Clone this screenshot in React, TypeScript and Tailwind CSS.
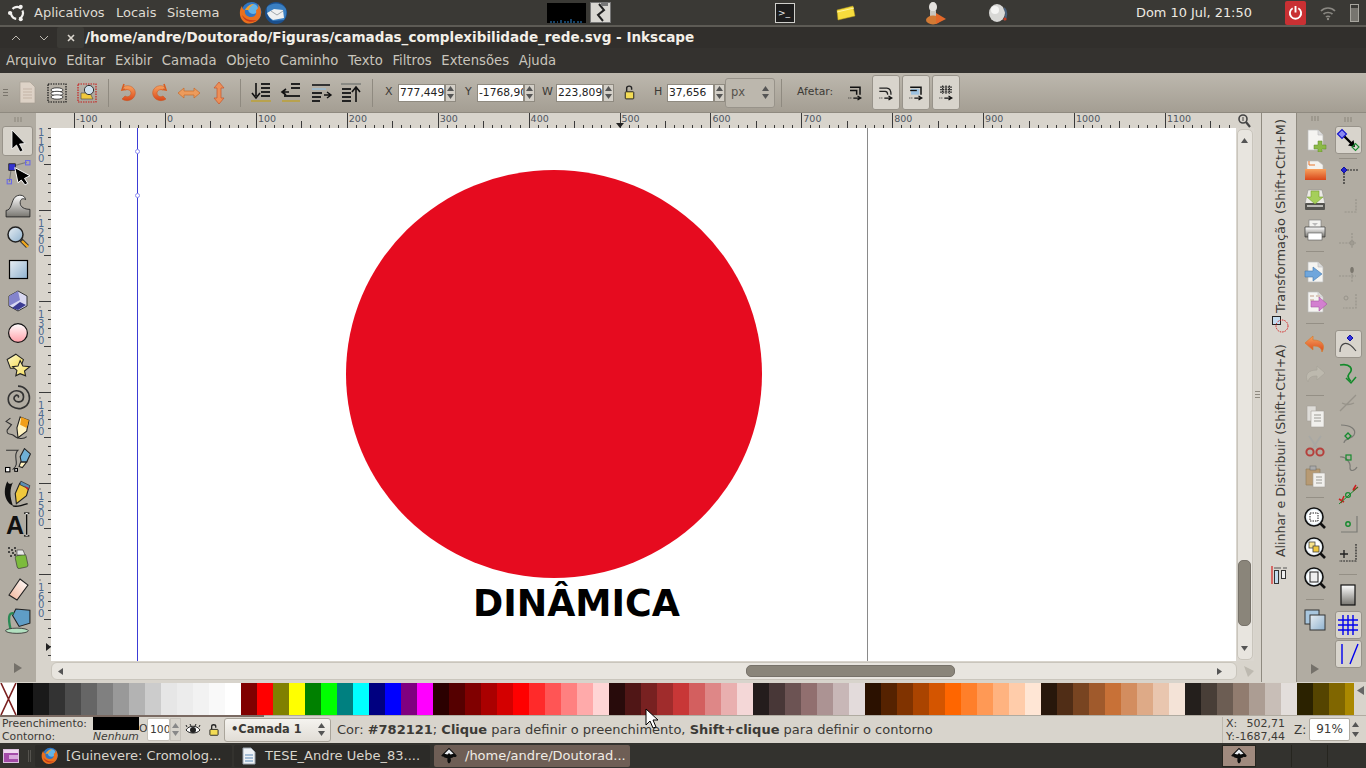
import React from "react";

const S = ({ c, s = 24, children }: { c?: string; s?: number; children: React.ReactNode }) => (
  <svg width={s} height={s} viewBox="0 0 24 24" className={c} fill="none">{children}</svg>
);

const Defs = () => (
  <svg width="0" height="0" className="absolute">
    <defs>
      <linearGradient id="gBlue" x1="0" y1="0" x2="1" y2="1"><stop offset="0" stopColor="#e8eef3" /><stop offset="1" stopColor="#8fb2cf" /></linearGradient>
      <linearGradient id="gGray" x1="0" y1="0" x2="0" y2="1"><stop offset="0" stopColor="#ffffff" /><stop offset="1" stopColor="#77756f" /></linearGradient>
      <linearGradient id="gPink" x1="0" y1="0" x2="0" y2="1"><stop offset="0" stopColor="#ffffff" /><stop offset="1" stopColor="#ff9fa8" /></linearGradient>
      <linearGradient id="gOr" x1="0" y1="0" x2="0" y2="1"><stop offset="0" stopColor="#f7a25f" /><stop offset="1" stopColor="#d9471a" /></linearGradient>
      <linearGradient id="gYel" x1="0" y1="0" x2="1" y2="1"><stop offset="0" stopColor="#fffbd0" /><stop offset="1" stopColor="#f3d950" /></linearGradient>
    </defs>
  </svg>
);

/* left tools */
const ArrowT = () => <S><path d="M6 1 L6 20 L10.5 16 L14 23 L17 21.5 L13.5 15 L19 14.5 Z" fill="#000" stroke="#fff" strokeWidth="0.8" /></S>;
const NodeT = () => <S s={26}><path d="M4 20 L6 6 L20 2" stroke="#777" /><rect x="3.5" y="3.5" width="6" height="6" fill="#3333d0" stroke="#000" strokeWidth=".6" /><rect x="19" y="0.5" width="4" height="4" stroke="#6a6ae8" /><rect x="2" y="18" width="4" height="4" stroke="#6a6ae8" /><path d="M9 7 L23 14.5 L18 17 L21 21.5 L18.5 23 L15 18.5 L12 21 Z" fill="#000" stroke="#fff" strokeWidth=".9" /></S>;
const TweakT = () => <S s={26}><path d="M1 23 L1 17 C6 17 6 8 9 5 C12 2 18 2 19 7 C16 5 14 7 14 10 C14 14 18 16 23 16 L23 23 Z" fill="url(#gGray)" stroke="#222" strokeWidth=".8" /></S>;
const ZoomT = () => <S><circle cx="9.5" cy="9.5" r="7.5" fill="url(#gBlue)" stroke="#222" strokeWidth="1.5" /><path d="M15 15 L21.5 21.5" stroke="#333" strokeWidth="4" /><path d="M16 16 L22 22" stroke="#f0a91e" strokeWidth="2.4" /></S>;
const RectT = () => <S><rect x="3.5" y="3.5" width="18" height="18" fill="url(#gBlue)" stroke="#000" strokeWidth="1.2" /></S>;
const BoxT = () => <S><path d="M12 2 L21 7 L21 17 L12 22 L3 17 L3 7 Z" fill="#d9d8f2" stroke="#333" strokeWidth="1" /><path d="M3 7 L12 2 L14 11 L3 17Z" fill="#8484cc" /><path d="M6 19 L14 13 L20 16 L12 21 Z" fill="#3b3b92" /></S>;
const CircleT = () => <S><circle cx="12" cy="12" r="9.4" fill="url(#gPink)" stroke="#111" strokeWidth="1.2" /></S>;
const StarT = () => <S s={26}><path d="M2 7 L10 2 L17 7 L14 15 L5 15 Z" fill="url(#gYel)" stroke="#222" /><path d="M14 8 L16.5 13 L23 13.5 L18 17.5 L19 22 L14 20 L10 22 L11 17 L7 13.5 L12 13 Z" fill="url(#gYel)" stroke="#222" /></S>;
const SpiralT = () => <S s={26}><path d="M12 12.5 C13.5 11 11 9.5 9.5 11 C7 13 9 17 13 16.5 C18 16 18.5 9 14 7 C8 4.5 3 9 3 14 C3 20 9 23.5 15 22.5 C19 21.5 22 18 22.5 14 C23 7 18 2 12 2" stroke="#333" strokeWidth="1.5" /></S>;
const PencilT = () => <S s={26}><path d="M5 2 L1 5 L6 8 L2 13 C1 18 6 16 8 18 C11 21 17 22 20 19" stroke="#333" strokeWidth="1" /><path d="M14 1 L22 4 L20 14 L12 20 L11 11 Z" fill="#fff3c0" stroke="#222" /><path d="M15 1 L22 4 L20 11 L14 8 Z" fill="#f19f1a" /></S>;
const PenT = () => <S s={26}><path d="M1 2 H12 C6 8 15 14 7 20" stroke="#333" strokeWidth="1" /><rect x="0.5" y="18" width="4" height="4" fill="#fff" stroke="#000" /><rect x="9" y="19" width="2.5" height="2.5" fill="#fff" stroke="#000" /><path d="M18 0.5 L23.5 5.5 L20 13 L15 13 L14 8 Z" fill="#6fb0d6" stroke="#222" /><path d="M14.5 13 L20 13 L16 18 L13 17 Z" fill="#fff3c0" stroke="#222" /></S>;
const CalligT = () => <S s={27}><path d="M3 1 C-1 9 0 19 8 23 C5 15 5 8 8 2 C6 4 4 4 3 1 Z" fill="#111" /><path d="M8 23 C11 24 15 23 21 21" stroke="#111" strokeWidth="1.4" /><path d="M14 3 L22 7 L20 14 L11 21 L10 12 Z" fill="#f0c83c" stroke="#222" /><path d="M15 1 L23 5 L22 8 L14 4 Z" fill="#5c8fb5" stroke="#222" strokeWidth=".6" /><path d="M18 5 L22 7 L21 9 Z" fill="#c8222a" /></S>;
const TextT = () => <S s={26}><text x="1" y="20" fontFamily="Liberation Sans" fontWeight="700" fontSize="23" fill="#111">A</text><path d="M17.5 1 h5 M20 1 v21 M17.5 22 h5" stroke="#000" strokeWidth="1.1" /><path d="M19 1.5 h2 M19 21.5 h2" stroke="#fff" /></S>;
const SprayT = () => <S><rect x="10" y="10" width="11" height="13" rx="2" transform="rotate(-12 15 16)" fill="#7cbb3c" stroke="#333" strokeWidth=".6" /><path d="M11 5 h6 l2 5 h-8 z" fill="#e9e9e9" stroke="#333" strokeWidth=".6" /><path d="M2 3 h2 M5 5 h2 M8 3 h2 M2 7 h2 M6 8 h2 M9 6 h1 M4 11 h2 M8 10 h2" stroke="#222" strokeWidth="1.4" /></S>;
const EraserT = () => <S><path d="M14 2 L22 8 L11 23 L3 18 Z" fill="url(#eraser)" stroke="#222" strokeWidth="1.1" /><defs><linearGradient id="eraser" x1="1" y1="0" x2="0" y2="1"><stop offset="0" stopColor="#fff" /><stop offset="1" stopColor="#f0b399" /></linearGradient></defs></S>;
const BucketT = () => <S s={26}><path d="M10 1 L23 2 L23 14 L13 17 L7 7 Z" fill="#5f9dc6" stroke="#222" /><path d="M8 5 C3 4 3 10 5 19" stroke="#2a8a55" strokeWidth="2.2" /><ellipse cx="11" cy="21" rx="10.5" ry="2.4" fill="#b3e0c0" stroke="#222" strokeWidth=".7" /></S>;

/* commands */
const Page = ({ children }: { children?: React.ReactNode }) => <S><path d="M5 2 H15 L20 7 V22 H5Z" fill="#f5f4f1" stroke="#bbb" strokeWidth=".7" /><path d="M15 2 V7 H20" fill="#ddd" stroke="#bbb" strokeWidth=".6" />{children}</S>;
const NewC = () => <Page><path d="M15 13 h4 v4 h4 v4 h-4 v3 h-4 v-3 h-4 v-4 h4z" fill="#8cb946" stroke="#5f8a2a" strokeWidth=".5" /></Page>;
const OpenC = () => <S><path d="M4 3 H15 L20 7 V14 H4Z" fill="#f4f2ee" stroke="#bbb" strokeWidth=".6" /><path d="M6 3 V7 H12" fill="none" stroke="#e8762c" /><path d="M2 11 H23 V22 H2Z" fill="url(#gOr)" /></S>;
const SaveC = () => <S><path d="M5 2 H19 L22 16 H2Z" fill="#eceae6" stroke="#888" strokeWidth=".5" /><rect x="2" y="15" width="20" height="7" rx="1" fill="#55544f" /><rect x="4" y="17" width="16" height="2" fill="#bdbcb7" /><path d="M8 3 h8 v6 h4 l-8 7 l-8 -7 h4z" fill="#a5cf5a" stroke="#76a030" strokeWidth=".6" /></S>;
const PrintC = () => <S><rect x="6" y="2" width="12" height="8" fill="#f3f3f0" stroke="#777" strokeWidth=".6" /><path d="M2 9 H22 V19 H2Z" fill="url(#gGray)" stroke="#333" strokeWidth=".7" /><rect x="5" y="15" width="14" height="7" fill="#fff" stroke="#555" strokeWidth=".6" /><path d="M9 5 h6 l-3 3z" fill="#bbb" /></S>;
const ImportC = () => <Page><path d="M2 11 H10 V7 L19 14 L10 21 V17 H2Z" fill="#6fa6dc" stroke="#4478ad" strokeWidth=".6" /></Page>;
const ExportC = () => <Page><path d="M7 5 h4 v2 h-4z M13 5 h4 v2 h-4z M7 9 h4 v2 h-4z" fill="#dcc9bd" /><path d="M8 11 H16 V7 L24 14 L16 21 V17 H8Z" fill="#d37fd0" stroke="#a657a3" strokeWidth=".6" /></Page>;
const UndoC = () => <S><path d="M10 4 L2 11 L10 18 V14 C15 14 18 15 19 20 C23 13 19 8 10 8Z" fill="url(#gOr)" stroke="#d97b2c" strokeWidth=".7" /></S>;
const RedoC = () => <S><path d="M14 4 L22 11 L14 18 V14 C9 14 6 15 5 20 C1 13 5 8 14 8Z" fill="#bdb9ae" stroke="#a7a399" strokeWidth=".7" /></S>;
const CopyC = () => <S><path d="M4 2 H13 V17 H4Z" fill="#dedcd8" stroke="#a5a39c" strokeWidth=".6" /><path d="M8 7 H21 V23 H8Z" fill="#f1f0ed" stroke="#a5a39c" strokeWidth=".6" /><path d="M11 11 h7 M11 14 h7 M11 17 h7" stroke="#9c9b95" /></S>;
const CutC = () => <S><path d="M6 2 L15 15 M18 2 L9 15" stroke="#a8a8a4" strokeWidth="1.8" /><circle cx="7" cy="18" r="3.6" stroke="#b5403c" strokeWidth="2" /><circle cx="17" cy="18" r="3.6" stroke="#b5403c" strokeWidth="2" /></S>;
const PasteC = () => <S><path d="M3 5 H17 V21 H3Z" fill="#b79a73" stroke="#8f7a58" strokeWidth=".6" /><rect x="7" y="2" width="6" height="4" fill="#aaa" stroke="#666" strokeWidth=".5" /><path d="M10 9 H22 V23 H10Z" fill="#f1f0ed" stroke="#a5a39c" strokeWidth=".6" /><path d="M13 13 h6 M13 16 h6 M13 19 h6" stroke="#9c9b95" /></S>;
const ZoomBase = ({ children }: { children?: React.ReactNode }) => <S><circle cx="11" cy="11" r="9" fill="#e3edf3" stroke="#111" strokeWidth="1.6" /><circle cx="11" cy="11" r="7" fill="#fff" />{children}<path d="M17.5 17.5 L22 22" stroke="#111" strokeWidth="2.6" /></S>;
const ZoomSel = () => <ZoomBase><rect x="7" y="7" width="8" height="8" stroke="#222" strokeDasharray="1.5 1" /></ZoomBase>;
const ZoomDraw = () => <ZoomBase><rect x="6" y="6" width="6" height="6" fill="#f8e38a" stroke="#444" strokeWidth=".8" /><rect x="10" y="10" width="6" height="6" fill="#f0c83c" stroke="#444" strokeWidth=".8" /></ZoomBase>;
const ZoomPage = () => <ZoomBase><rect x="7" y="6" width="8" height="10" fill="#eee" stroke="#222" /></ZoomBase>;
const DupC = () => <S><rect x="2" y="2" width="14" height="14" fill="#a8c6de" stroke="#333" /><rect x="7" y="7" width="15" height="15" fill="url(#gBlue)" stroke="#333" /></S>;

/* snap */
const SnapNodes = () => <S><path d="M6 6 L18 18" stroke="#000" strokeWidth="2.4" /><path d="M19 19 l-7 -1.5 l5.5 -5.5z" fill="#000" /><path d="M1.5 6 L6 1.5 L10.5 6 L6 10.5Z" fill="#8a8af0" stroke="#1212cc" strokeWidth="1.1" /><path d="M16 19 L19.5 15.5 L23 19 L19.5 22.5Z" stroke="#168a2e" strokeWidth="1.1" /></S>;
const SnapBbox = () => <S><path d="M8 6 H22 M8 6 V20" stroke="#222" strokeDasharray="2 1" strokeWidth="1.2" /><path d="M5 6 L8 3 L11 6 L8 9Z" fill="#2222d0" stroke="#1212a0" /></S>;
const f = "#97938a";
const SnapA = () => <S><path d="M20 3 V16 H8" stroke={f} strokeDasharray="2 1.2" strokeWidth="1.2" /></S>;
const SnapB = () => <S><path d="M3 15 H20 M16 5 V20" stroke={f} strokeDasharray="2 1.2" strokeWidth="1.2" /><circle cx="16" cy="15" r="2.2" fill="#a09c92" stroke={f} /></S>;
const SnapC = () => <S><path d="M3 16 H20 M16 7 V22" stroke={f} strokeDasharray="2 1.2" strokeWidth="1.2" /><ellipse cx="16" cy="10" rx="1.8" ry="3" fill="#7b776e" /></S>;
const SnapD = () => <S><path d="M20 4 V18 H7" stroke={f} strokeDasharray="2 1.2" strokeWidth="1.2" /><circle cx="10" cy="8" r="2" stroke={f} /></S>;
const SnapE = () => <S><path d="M4 20 C4 12 10 6 20 19" stroke="#444" strokeWidth="1.1" fill="none" /><path d="M11 6 L14 3 L17 6 L14 9Z" fill="#3030e0" stroke="#1212a0" /></S>;
const SnapF = () => <S><path d="M4 4 C14 2 18 8 13 13 C11 15 13 19 15 20" stroke="#138a2a" strokeWidth="1.7" /><path d="M10 17 L15 22 L20 16" stroke="#138a2a" strokeWidth="1.5" /></S>;
const SnapG = () => <S><path d="M4 20 L20 4 M6 12 C10 14 14 14 18 12" stroke={f} strokeWidth="1.3" /></S>;
const SnapH = () => <S><path d="M5 4 C14 4 21 8 18 14 C16 18 8 17 8 22" stroke="#7b7a75" strokeWidth="1.2" /><path d="M9 15 L12 12 L15 15 L12 18Z" stroke="#168a2e" strokeWidth="1.3" /></S>;
const SnapI = () => <S><path d="M4 6 C10 5 15 12 14 17 C14 20 18 21 21 16" stroke="#7b7a75" strokeWidth="1.2" /><rect x="10" y="4" width="5" height="5" stroke="#168a2e" strokeWidth="1.2" /></S>;
const SnapJ = () => <S><path d="M3 17 L8 20 M5 21 L8 14 M17 9 L22 5 M17 8 L20 3" stroke="#cc2020" strokeWidth="1.5" /><path d="M3 22 L22 5" stroke="#168a2e" strokeWidth="1" /><circle cx="12" cy="13" r="2.4" stroke="#168a2e" strokeWidth="1.2" /></S>;
const SnapK = () => <S><path d="M21 4 V20 H5" stroke="#7b7a75" strokeWidth="1.2" /><circle cx="12" cy="12" r="2.2" stroke="#168a2e" strokeWidth="1.4" /></S>;
const SnapL = () => <S><path d="M8 9 V17 M4 13 H12" stroke="#222" strokeWidth="1.4" /><path d="M20 3 V20 H3" stroke="#222" strokeDasharray="1.8 1" strokeWidth="1.2" /></S>;
const SnapM = () => <S><rect x="5" y="2" width="14" height="20" fill="url(#gGray)" stroke="#111" strokeWidth="1.2" /></S>;
const SnapN = () => <S><path d="M2 7 H22 M2 12 H22 M2 17 H22 M7 2 V22 M12 2 V22 M17 2 V22" stroke="#0000ee" strokeWidth="1.4" /></S>;
const SnapO = () => <S><path d="M6 2 V22 M22 2 L14 22" stroke="#0000ee" strokeWidth="1.4" /></S>;

/* toolbar */
const DocT = () => <S c="opacity-80"><path d="M5 1 H15 L20 6 V22 H5Z" fill="#e9dcd0" stroke="#a89d92" strokeWidth=".7" /><path d="M8 8 h9 M8 11 h9 M8 14 h9 M8 17 h9" stroke="#c9b7a8" /></S>;
const SelAll = () => <S><rect x="3" y="3" width="18" height="18" stroke="#111" strokeDasharray="1.5 1" strokeWidth="1.2" /><ellipse cx="12" cy="9" rx="6" ry="2.2" fill="#fff" stroke="#222" strokeWidth=".8" /><ellipse cx="12" cy="12.5" rx="6" ry="2.2" fill="#fff" stroke="#222" strokeWidth=".8" /><ellipse cx="12" cy="16" rx="6" ry="2.2" fill="#fff" stroke="#222" strokeWidth=".8" /></S>;
const SelTouch = () => <S><rect x="3" y="3" width="18" height="18" stroke="#c81e1e" strokeDasharray="1.5 1" strokeWidth="1.2" /><path d="M6 12 H15 L18 18 H6Z" fill="#f0c83c" stroke="#444" strokeWidth=".6" /><circle cx="14" cy="9" r="4.6" fill="#cfe0ec" stroke="#333" /></S>;
const RotL = () => <S><path d="M7 3 L5 9 L11 8" fill="none" stroke="#d95b1f" strokeWidth="1.6" /><path d="M6 6 C13 2 20 8 18 14 C16 20 9 21 5 18 L8 15 C12 17 14 14 14 12 C14 9 10 8 8 9Z" fill="url(#gOr)" stroke="#c9531a" strokeWidth=".5" /></S>;
const RotR = () => <S><path d="M17 3 L19 9 L13 8" fill="none" stroke="#d95b1f" strokeWidth="1.6" /><path d="M18 6 C11 2 4 8 6 14 C8 20 15 21 19 18 L16 15 C12 17 10 14 10 12 C10 9 14 8 16 9Z" fill="url(#gOr)" stroke="#c9531a" strokeWidth=".5" /></S>;
const FlipH = () => <S><path d="M1 12 L7 7 V10 H17 V7 L23 12 L17 17 V14 H7 V17Z" fill="#ec9b5c" stroke="#c96a2a" strokeWidth=".7" /></S>;
const FlipV = () => <S><path d="M12 1 L17 7 H14 V17 H17 L12 23 L7 17 H10 V7 H7Z" fill="#ec8f58" stroke="#c9552a" strokeWidth=".7" /></S>;
const Lower2 = () => <S><path d="M12 3 h9 M12 7 h9 M12 11 h9 M12 15 h9" stroke="#222" strokeWidth="2" /><path d="M7 2 V15 M3 12 L7 17 L11 12" stroke="#111" strokeWidth="1.6" /><path d="M2 20 H22" stroke="#b8a24e" strokeWidth="2" /></S>;
const Lower1 = () => <S><path d="M12 3 h9 M12 7 h9 M5 15 h16" stroke="#222" strokeWidth="2" /><path d="M4 11 H10 M7 8 L3 11 L7 14" stroke="#111" strokeWidth="1.6" /><path d="M3 20 H21" stroke="#b8a24e" strokeWidth="2" /></S>;
const Raise1 = () => <S><path d="M3 4 H21" stroke="#333" strokeWidth="2" /><path d="M3 8 H17" stroke="#9fb8c8" strokeWidth="2" /><path d="M3 12 h10 M3 16 h9 M3 20 h8" stroke="#222" strokeWidth="2" /><path d="M15 14 H21 M18 11 L22 14 L18 17" stroke="#111" strokeWidth="1.4" /></S>;
const Raise2 = () => <S><path d="M2 3 H22" stroke="#8a8a84" strokeWidth="2" /><path d="M3 8 h9 M3 12 h9 M3 16 h9 M3 20 h9" stroke="#222" strokeWidth="2" /><path d="M17 21 V7 M13 11 L17 6 L21 11" stroke="#111" strokeWidth="1.6" /></S>;
const LockI = () => <S s={17}><path d="M8 11 V6 C8 2 15 2 15 6 V8" stroke="#222" strokeWidth="2" /><rect x="6" y="11" width="12" height="10" rx="1" fill="#f3dc55" stroke="#222" strokeWidth="1.4" /></S>;
const Affect = ({ kind }: { kind: number }) => <S s={20}>
  {kind === 0 && <path d="M6 5 H18 V14 M6 9 H14 V14" stroke="#111" strokeWidth="1.8" />}
  {kind === 1 && <path d="M4 6 H13 C17 6 18 9 18 14 M4 10 H11 C13 10 14 11 14 14" stroke="#222" strokeWidth="1.5" />}
  {kind === 2 && <><rect x="6" y="7" width="10" height="7" fill="#9ec2e0" /><path d="M5 5 H18 V14" stroke="#111" strokeWidth="1.8" /><path d="M5 9 H13" stroke="#111" strokeWidth="1.6" /></>}
  {kind === 3 && <path d="M5 5 H19 M5 8 H19 M5 11 H19 M8 3 V13 M12 3 V13 M16 3 V13" stroke="#222" strokeWidth="1.5" strokeDasharray="2 1" />}
  <path d="M10 18 H18 M15 15.5 L19 18 L15 20.5" stroke="#111" strokeWidth="1.5" />
  <path d="M4 18 h4" stroke="#111" strokeDasharray="1.2 1.2" />
</S>;

/* panel */
const UbuntuLogo = () => <S s={20}><circle cx="12" cy="12" r="7.2" stroke="#f2f1ef" strokeWidth="2.6" strokeDasharray="11.5 3.6" transform="rotate(-25 12 12)" /><circle cx="3.5" cy="12" r="2.4" fill="#f2f1ef" /><circle cx="16.5" cy="4.5" r="2.4" fill="#f2f1ef" /><circle cx="16.5" cy="19.5" r="2.4" fill="#f2f1ef" /></S>;
const Firefox = ({ s = 24 }: { s?: number }) => <S s={s}><circle cx="12.5" cy="11" r="10" fill="#2f76c4" /><circle cx="14" cy="8" r="5" fill="#63b4e8" /><path d="M19 3 C23 8 23 15 19 19 C15 23 8 24 4 20 C0 16 0 9 3 5 C3 8 5 9 6 9 C5 13 8 16 12 16 C16 16 18 13 17 9 C19 8 20 6 19 3Z" fill="#e9701d" /><path d="M3 14 C5 20 12 23 18 19 C12 20 7 19 3 14Z" fill="#c6381a" /><path d="M6 9 C8 5 12 3 15 3 C12 5 10 7 10 9Z" fill="#f0a030" /></S>;
const Thunder = () => <S><circle cx="12" cy="12" r="11" fill="#1b4f8c" /><path d="M3 6 C8 1 18 1 22 8 C23 12 22 16 20 19 L9 20 C4 17 2 10 3 6Z" fill="#3a7fc1" /><path d="M3 12 L10 8 L19 9 L20 17 L9 19 C6 17 4 15 3 12Z" fill="#eef0f0" /><path d="M7 10 L13 14 L19 10" stroke="#9fa6ab" strokeWidth="1" /></S>;
const InkLogo = ({ s = 20 }: { s?: number }) => <S s={s}><path d="M12 1 L22 11 C23 13 20 14 18 13 C17 15 15 14 14 15 C15 17 15 20 12 22 C9 20 10 17 10 15 C8 14 6 15 5 13 C3 13 1 12 2 11Z" fill="#0c0c0c" /><path d="M12 3 L18 9 L14 10 L12 8 L10 10 L6 9Z" fill="#e9edf2" /></S>;

const TopBar = () => (
  <div className="h-[27px] bg-[#3a3935] border-b-[2px] border-[#5d5b55] flex items-center text-[#dfdbd2] text-[13px] relative whitespace-nowrap">
    <div className="w-[34px] shrink-0 pl-[7px]"><UbuntuLogo /></div>
    <span className="w-[71px] shrink-0">Aplicativos</span>
    <span className="ml-[11px] w-[41px] shrink-0">Locais</span>
    <span className="ml-[10px] w-[52px] shrink-0">Sistema</span>
    <div className="ml-[20px] flex shrink-0"><Firefox /><span className="ml-[1px]"><Thunder /></span></div>
    <div className="ml-[259px] w-[39px] h-[20px] shrink-0 bg-black flex items-end justify-center"><svg width="36" height="4"><path d="M1 3h2M5 2v2M8 3h1M12 1v3M15 3h2M19 2v2M22 0v4M25 2v2M28 3h2M32 2v2" stroke="#2d86d2" /></svg></div>
    <div className="ml-[4px] w-[21px] h-[21px] shrink-0 bg-[#d9d7d2] border border-[#777] flex items-center justify-center"><svg width="16" height="19"><path d="M6 1 L11 7 L5 12 L10 18" stroke="#222" strokeWidth="2" fill="none" /><rect x="8" y="0" width="7" height="3" fill="#777" /></svg></div>
    <div className="ml-[164px] w-[20px] h-[20px] shrink-0 bg-[#1d1d1d] border border-[#cfcfcb] text-[9px] text-[#eee] leading-[18px] pl-[2px]">&gt;_</div>
    <div className="ml-[41px] shrink-0"><svg width="20" height="16"><path d="M1 5 L17 1 L19 11 L2 15Z" fill="#f6dc3d" stroke="#b99e1a" strokeWidth=".5" /><path d="M1 7 L18 3" stroke="#fff5a0" /></svg></div>
    <div className="ml-[66px] w-[26px] shrink-0 flex justify-center"><svg width="26" height="24"><ellipse cx="11" cy="6" rx="4" ry="5" fill="#e4e2de" /><path d="M8 10 h6 v5 h-6z" fill="#c9c6bf" /><ellipse cx="11" cy="19" rx="7" ry="4.4" fill="#d37a34" /><path d="M14 12 L24 18 L14 23Z" fill="#e2682a" /></svg></div>
    <div className="ml-[38px] shrink-0"><svg width="24" height="22"><ellipse cx="11" cy="11" rx="8" ry="9" fill="#d8d8d6" /><ellipse cx="9" cy="8" rx="4" ry="4" fill="#f5f5f4" /><path d="M18 6 C21 9 21 15 18 18" stroke="#49607c" strokeWidth="2" fill="none" /><circle cx="19" cy="17" r="1.6" fill="#c23b22" /></svg></div>
    <span className="ml-[126px] w-[115px] shrink-0 text-[12.9px] text-[#eeeae2]">Dom 10 Jul, 21:50</span>
    <div className="ml-[34px] w-[21px] h-[24px] shrink-0 rounded-[2px] bg-[#c93033] flex items-center justify-center"><svg width="15" height="15" viewBox="0 0 16 16"><path d="M5 3.5 A6 6 0 1 0 11 3.5 M8 1 V8" stroke="#fff" strokeWidth="2" fill="none" /></svg></div>
    <div className="ml-[12px] shrink-0"><svg width="20" height="20" viewBox="0 0 20 20"><path d="M3 8 C7 4 13 4 17 8 M5.5 11 C8 9 12 9 14.5 11 M8 14 C9 13 11 13 12 14" stroke="#8a8882" strokeWidth="1.7" fill="none" /><circle cx="10" cy="16" r="1.2" fill="#8a8882" /></svg></div>
    <div className="ml-[12px] w-[9px] h-[18px] shrink-0 border border-[#a8a69f] relative"><div className="absolute bottom-0 left-0 right-0 h-[13px] bg-[#77756f]" /></div>
  </div>
);

const TitleBar = () => (
  <div className="h-[21px] bg-[#312f2c] flex items-center text-[#f3efe8] font-bold text-[13.55px] relative">
    <span className="w-[28px] pl-[10px]"><svg width="12" height="8"><path d="M2 6 L6 2 L10 6" stroke="#bdb9b1" fill="none" /></svg></span>
    <span className="w-[29px] pl-[10px]"><svg width="12" height="8"><path d="M2 2 L6 6 L10 2" stroke="#bdb9b1" fill="none" /></svg></span>
    <span className="w-[27px] h-[21px] bg-[#3b3a36] rounded-[2px] flex items-center justify-center"><svg width="10" height="10"><path d="M2 2 L8 8 M8 2 L2 8" stroke="#dcd8d0" strokeWidth="1.6" /></svg></span>
    <span className="ml-[1px] whitespace-nowrap">/home/andre/Doutorado/Figuras/camadas_complexibilidade_rede.svg - Inkscape</span>
  </div>
);

const MenuBar = () => (
  <div className="h-[25px] bg-[#34322f] flex items-center pl-[6px] gap-[9.7px] text-[#c9c5bc] text-[13.2px]">
    {["Arquivo", "Editar", "Exibir", "Camada", "Objeto", "Caminho", "Texto", "Filtros", "Extensões", "Ajuda"].map((m) => <span key={m}>{m}</span>)}
  </div>
);

const Sep = () => <div className="w-[12px] flex justify-center"><div className="w-px h-[28px] bg-[#8f8a80]" /></div>;
const Tb = ({ children }: { children: React.ReactNode }) => <div className="w-[30px] flex items-center justify-center">{children}</div>;

const Spin = ({ w, v }: { w: string; v: string }) => (
  <div className="flex h-[18px]">
    <div className={w + " bg-white border border-[#8f8a80] text-[10.7px] leading-[16px] text-[#222] pl-[1px] overflow-hidden whitespace-nowrap"}>{v}</div>
    <div className="w-[11px] bg-[#d3cfc7] border border-[#8f8a80] flex flex-col items-center justify-around">
      <svg width="7" height="5"><path d="M0 5 L3.5 0 L7 5Z" fill="#555" /></svg>
      <svg width="7" height="5"><path d="M0 0 L3.5 5 L7 0Z" fill="#555" /></svg>
    </div>
  </div>
);

const AffBtn = ({ k }: { k: number }) => (
  <div className="w-[28px] h-[35px] rounded-[3px] bg-[#d8d4cc] border border-[#98938a] flex items-center justify-center"><Affect kind={k} /></div>
);

const ToolBar = () => (
  <div className="h-[40px] bg-gradient-to-b from-[#bdb8ae] to-[#a49e93] flex items-center border-b border-[#8f8a80] text-[#3c3a36] text-[11px]">
    <div className="w-[12px] pl-[3px] flex flex-col gap-[2px]"><div className="w-[5px] h-px bg-[#7a756c]" /><div className="w-[5px] h-px bg-[#7a756c]" /><div className="w-[5px] h-px bg-[#7a756c]" /></div>
    <Tb><DocT /></Tb><Tb><SelAll /></Tb><Tb><SelTouch /></Tb>
    <Sep />
    <Tb><RotL /></Tb><Tb><RotR /></Tb><Tb><FlipH /></Tb><Tb><FlipV /></Tb>
    <Sep />
    <Tb><Lower2 /></Tb><Tb><Lower1 /></Tb><Tb><Raise1 /></Tb><Tb><Raise2 /></Tb>
    <Sep />
    <span className="ml-[7px] w-[13px]">X</span>
    <Spin w="w-[47px]" v="777,449" />
    <span className="ml-[9px] w-[12px]">Y</span>
    <Spin w="w-[47px]" v="-1768,90" />
    <span className="ml-[7px] w-[14px]">W</span>
    <Spin w="w-[47px]" v="223,809" />
    <div className="ml-[3px] w-[24px] flex justify-center"><LockI /></div>
    <span className="ml-[13px] w-[13px]">H</span>
    <Spin w="w-[47px]" v="37,656" />
    <div className="w-[50px] h-[30px] rounded-[3px] bg-[#bcb7ad] border border-[#98938a] flex items-center justify-between px-[5px] text-[11.5px] text-[#55524c]">px<span className="flex flex-col gap-[3px]"><svg width="7" height="5"><path d="M0 5 L3.5 0 L7 5Z" fill="#555" /></svg><svg width="7" height="5"><path d="M0 0 L3.5 5 L7 0Z" fill="#555" /></svg></span></div>
    <Sep />
    <span className="ml-[10px] w-[46px] text-[10.8px]">Afetar:</span>
    <div className="w-[24px] flex justify-center"><Affect kind={0} /></div>
    <div className="ml-[5px] flex gap-[2px]"><AffBtn k={1} /><AffBtn k={2} /><AffBtn k={3} /></div>
  </div>
);

const Grip3 = () => <svg width="12" height="6"><path d="M3 0v5M6 0v5M9 0v5" stroke="#8a857b" /></svg>;

const LeftTools = () => {
  const icons = [NodeT, TweakT, ZoomT, RectT, BoxT, CircleT, StarT, SpiralT, PencilT, PenT, CalligT, TextT, SprayT, EraserT, BucketT];
  return (
    <div className="w-[36px] bg-[#b1aca2] flex flex-col items-center">
      <div className="h-[13px] flex items-center"><Grip3 /></div>
      <div className="h-[30px] mb-[1px] w-[31px] rounded-[3px] border border-[#98938a] bg-[#d6d2ca] flex items-center justify-center"><ArrowT /></div>
      {icons.map((I, i) => <div key={i} className="h-[32px] flex items-center justify-center"><I /></div>)}
      <div className="mt-[26px]"><svg width="8" height="10"><path d="M0 0 L8 5 L0 10Z" fill="#75716a" /></svg></div>
    </div>
  );
};

const HRuler = () => {
  const ticks: number[] = [];
  for (let i = -10; i <= 120; i++) ticks.push(i);
  return (
    <div className="h-[15px] bg-[#d8d4cc] relative overflow-hidden">
      <svg width="1200" height="15" className="block">
        {ticks.map((i) => {
          const x = Math.round(165 - 36 + i * 9.09) + 0.5;
          const h = i % 10 === 0 ? 15 : i % 5 === 0 ? 7 : 3;
          return <path key={i} d={`M${x} ${15 - h} V15`} stroke="#3a3a3a" />;
        })}
        {[-100, 0, 100, 200, 300, 400, 500, 600, 700, 800, 900, 1000, 1100].map((v) => (
          <text key={v} x={165 - 36 + (v / 100) * 90.9 + 2} y="9" fontSize="9.5" fill="#4d5560" fontFamily="DejaVu Sans">{v}</text>
        ))}
        <path d="M580 10 L588 10 L584 15Z" fill="#222" />
      </svg>
      <div className="absolute right-[8px] top-0 bg-[#d8d4cc] w-[18px] flex justify-center"><svg width="14" height="15" viewBox="0 0 14 15"><circle cx="6" cy="6" r="4" fill="none" stroke="#444" strokeWidth="1.6" /><path d="M9 9 L13 14" stroke="#444" strokeWidth="2.2" /><path d="M6 4v4" stroke="#444" /></svg></div>
    </div>
  );
};

const VRuler = () => {
  const ticks: number[] = [];
  for (let i = 0; i <= 60; i++) ticks.push(i);
  const labels: [number, string][] = [[-9, "1100"], [82, "1200"], [173, "1300"], [264, "1400"], [355, "1500"], [446, "1600"]];
  return (
    <div className="w-[15px] bg-[#d8d4cc]">
      <svg width="15" height="533" className="block">
        {ticks.map((i) => {
          const y = Math.round(-9 + i * 9.09) + 0.5;
          const h = i % 10 === 0 ? 12 : i % 5 === 0 ? 7 : 3;
          return <path key={i} d={`M${15 - h} ${y} H15`} stroke="#3a3a3a" />;
        })}
        {labels.map(([y, t]) => (
          <g key={t}>
            <path d={`M3 ${y + 6} h2`} stroke="#777" />
            {t.split("").map((c, i) => <text key={i} x="2" y={y + 17 + i * 8.6} fontSize="10" fill="#4f6b90" fontFamily="DejaVu Sans">{c}</text>)}
          </g>
        ))}
        <path d="M10 515 L15 519 L10 523Z" fill="#222" />
      </svg>
    </div>
  );
};

const Canvas = () => (
  <div className="w-[1185px] h-[533px] bg-white relative overflow-hidden">
    <div className="absolute left-[86px] top-0 bottom-0 w-px bg-[#3c3cd6]" />
    <div className="absolute left-[816px] top-0 bottom-0 w-px bg-[#8a8a8a]" />
    <div className="absolute left-[84px] top-[21px] w-[5px] h-[5px] rounded-full border border-[#8c8cf2] bg-white" />
    <div className="absolute left-[84px] top-[65px] w-[5px] h-[5px] rounded-full border border-[#8c8cf2] bg-white" />
    <div className="absolute left-[295px] top-[42px] w-[416px] h-[408px] rounded-[50%] bg-[#e60b1f]" />
    <div className="absolute left-[422px] top-[452px] text-[36.4px] leading-[48px] font-bold text-black whitespace-nowrap">DINÂMICA</div>
  </div>
);

const VScroll = () => (
  <div className="w-[18px] h-[533px] bg-[#dad6cf] py-[1px] px-[1px]">
    <div className="h-full w-[16px] rounded-[5px] bg-[#e8e5df] border border-[#c9c5bc] flex flex-col items-center pt-[8px]">
      <svg width="7" height="5"><path d="M0 5 L3.5 0 L7 5Z" fill="#555" /></svg>
      <div className="mt-[417px] w-[13px] h-[66px] rounded-[5px] bg-[#8a857a] border border-[#77726a]" />
      <div className="mt-[20px]"><svg width="7" height="5"><path d="M0 0 L3.5 5 L7 0Z" fill="#555" /></svg></div>
    </div>
  </div>
);

const HScroll = () => (
  <div className="h-[21px] bg-[#d8d4cc] flex pl-[15px]">
    <div className="w-[1186px] h-[18px] mt-[1px] rounded-[6px] bg-[#e8e5df] border border-[#c9c5bc] flex items-center pl-[6px]">
      <svg width="5" height="7"><path d="M5 0 L0 3.5 L5 7Z" fill="#555" /></svg>
      <div className="ml-[683px] w-[209px] h-[12px] rounded-[5px] bg-[#8a857a] border border-[#77726a]" />
      <div className="ml-[262px]"><svg width="5" height="7"><path d="M0 0 L5 3.5 L0 7Z" fill="#555" /></svg></div>
    </div>
    <div className="ml-[5px] mt-[3px]"><svg width="14" height="14"><path d="M2 2 L12 7 L6 13Z" fill="#bdb9b0" /></svg></div>
  </div>
);

const Dock = () => (
  <div className="w-[36px] bg-[#d9d5ce] border-l border-r border-[#8f8a80] flex flex-col items-center pt-[7px] text-[#3c3a36] leading-[18px]">
    <span className="ml-[3px] text-[12.9px] [writing-mode:vertical-rl] rotate-180 whitespace-nowrap h-[193px]">Transformação (Shift+Ctrl+M)</span>
    <div className="h-[21px]"><svg width="20" height="21" className="block"><rect x="3.5" y="3.5" width="8" height="8" fill="#c4dcef" stroke="#222" /><circle cx="13" cy="13" r="6" fill="none" stroke="#d42020" strokeDasharray="1.5 1" /></svg></div>
    <span className="ml-[3px] mt-[11px] text-[12.6px] [writing-mode:vertical-rl] rotate-180 whitespace-nowrap h-[212px]">Alinhar e Distribuir (Shift+Ctrl+A)</span>
    <div className="mt-[8px]"><svg width="20" height="20" className="block"><path d="M3 1 V19" stroke="#d42020" strokeWidth="1.2" /><path d="M5 3 H12 M14 3 H18" stroke="#555" /><rect x="5.5" y="5.5" width="4" height="13" fill="#c4dcef" stroke="#333" /><rect x="12.5" y="5.5" width="4" height="8" fill="#eee" stroke="#333" /></svg></div>
  </div>
);

const HSep = () => <div className="h-[12px] flex items-center"><div className="w-[18px] h-px bg-[#948f85]" /></div>;
const Cmd = ({ I }: { I: React.FC }) => <div className="h-[30px] flex items-center justify-center"><I /></div>;

const CommandCol = () => (
  <div className="w-[34px] flex flex-col items-center pl-[2px]">
    <div className="h-[12px] flex items-center"><Grip3 /></div>
    <Cmd I={NewC} /><Cmd I={OpenC} /><Cmd I={SaveC} /><Cmd I={PrintC} /><HSep />
    <Cmd I={ImportC} /><Cmd I={ExportC} /><HSep />
    <Cmd I={UndoC} /><Cmd I={RedoC} /><HSep />
    <Cmd I={CopyC} /><Cmd I={CutC} /><Cmd I={PasteC} /><HSep />
    <Cmd I={ZoomSel} /><Cmd I={ZoomDraw} /><Cmd I={ZoomPage} /><HSep />
    <Cmd I={DupC} />
    <div className="mt-[29px]"><svg width="8" height="10"><path d="M0 0 L8 5 L0 10Z" fill="#75716a" /></svg></div>
  </div>
);

const Sel = ({ I }: { I: React.FC }) => <div className="w-[27px] h-[28px] rounded-[3px] bg-[#d8d4cc] border border-[#98938a] flex items-center justify-center"><I /></div>;
const SnapCol = () => (
  <div className="w-[35px] flex flex-col items-center">
    <div className="h-[13px] flex items-center"><Grip3 /></div>
    <Sel I={SnapNodes} />
    <div className="h-[6px] flex items-center mt-[1px]"><div className="w-[18px] h-px bg-[#948f85]" /></div>
    <div className="h-[30px] flex items-center"><SnapBbox /></div>
    <div className="h-[33px] flex items-center"><SnapA /></div>
    <div className="h-[32px] flex items-center"><SnapB /></div>
    <div className="h-[32px] flex items-center"><SnapC /></div>
    <div className="h-[28px] flex items-center"><SnapD /></div>
    <div className="h-[14px]" />
    <Sel I={SnapE} />
    <div className="h-[30px] flex items-center"><SnapF /></div>
    <div className="h-[30px] flex items-center"><SnapG /></div>
    <div className="h-[30px] flex items-center"><SnapH /></div>
    <div className="h-[30px] flex items-center"><SnapI /></div>
    <div className="h-[32px] flex items-center"><SnapJ /></div>
    <div className="h-[28px] flex items-center"><SnapK /></div>
    <div className="h-[30px] flex items-center"><SnapL /></div>
    <div className="h-[12px] flex items-center"><div className="w-[18px] h-px bg-[#948f85]" /></div>
    <div className="h-[30px] flex items-center"><SnapM /></div>
    <div className="mt-[1px]"><Sel I={SnapN} /></div>
    <div className="mt-[1px]"><Sel I={SnapO} /></div>
  </div>
);

const PALETTE = ["000000","1a1a1a","333333","4d4d4d","666666","808080","999999","b3b3b3","cccccc","e6e6e6","ececec","f2f2f2","f9f9f9","ffffff","800000","ff0000","808000","ffff00","008000","00ff00","008080","00ffff","000080","0000ff","800080","ff00ff","2b0000","550000","800000","aa0000","d40000","ff0000","ff2a2a","ff5555","ff8080","ffaaaa","ffd5d5","280b0b","501616","782121","a02c2c","c83737","d35f5f","de8787","e9afaf","f4d7d7","241c1c","483737","6c5353","916f6f","ac9393","c8b7b7","e3dbdb","2b1100","552200","803300","aa4400","d45500","ff6600","ff7f2a","ff9955","ffb380","ffccaa","ffe6d5","28170b","502d16","784421","a05a2c","c87137","d38d5f","deaa87","e9c6af","f4e3d7","241f1c","483e37","6c5d53","917c6f","ac9d93","c8beb7","e3dedb","2b2200","554400","806600","aa8800"];

const Palette = () => (
  <div className="h-[33px] bg-[#d8d4cc] flex pt-[1px] overflow-hidden">
    <div className="w-[1354px] h-[32px] flex overflow-hidden">
      <svg width="17" height="32" className="shrink-0"><rect width="17" height="32" fill="#fff" /><path d="M1 0 L16 32 M16 0 L1 32" stroke="#7a1f1f" strokeWidth="1.6" /></svg>
      {PALETTE.map((c, i) => <div key={i} className="w-[16px] h-[32px] shrink-0" style={{ backgroundColor: "#" + c }} />)}
    </div>
    <div className="flex-1 flex justify-center pt-[3px]"><svg width="7" height="9"><path d="M7 0 L0 4.5 L7 9Z" fill="#666" /></svg></div>
  </div>
);

const StatusBar = () => (
  <div className="h-[28px] bg-[#d8d4cc] text-[#3c3a36] flex items-center relative border-t border-[#b0aba1] text-[10.8px]">
    <div className="absolute left-0 top-[-1px] w-[264px] h-[2px] bg-[#7a6a62]" />
    <div className="w-[93px] pl-[2px] leading-[13px] shrink-0"><div>Preenchimento:</div><div>Contorno:</div></div>
    <div className="w-[46px] leading-[13px] shrink-0"><div className="h-[13px] bg-black" /><div className="italic whitespace-nowrap">Nenhum</div></div>
    <span className="w-[8px] shrink-0 overflow-hidden">O:</span>
    <div className="flex h-[23px] w-[34px] shrink-0">
      <div className="w-[23px] bg-white border border-[#c5c1b9] rounded-[2px] text-[10.8px] leading-[21px] overflow-hidden pl-[2px]">100</div>
      <div className="w-[11px] border border-[#c5c1b9] flex flex-col items-center justify-around py-[2px]"><svg width="7" height="5"><path d="M0 5 L3.5 0 L7 5Z" fill="#888" /></svg><svg width="7" height="5"><path d="M0 0 L3.5 5 L7 0Z" fill="#888" /></svg></div>
    </div>
    <div className="ml-[4px] w-[16px] shrink-0"><svg width="16" height="12" viewBox="0 0 16 12" className="block"><path d="M1 6 C4 1 12 1 15 6 C12 10 4 10 1 6Z" fill="#fff" stroke="#222" /><circle cx="8" cy="6" r="3" fill="#222" /><path d="M2 3 L1 1 M6 2 L5 0 M10 2 L11 0 M14 3 L15 1" stroke="#222" /></svg></div>
    <div className="ml-[6px] w-[14px] shrink-0"><svg width="14" height="16" viewBox="0 0 24 24" className="block"><path d="M8 11 V6 C8 2 15 2 15 6 V8" stroke="#222" strokeWidth="2.2" fill="none" /><rect x="5" y="11" width="14" height="10" rx="1" fill="#f3dc55" stroke="#222" strokeWidth="1.6" /></svg></div>
    <div className="ml-[3px] w-[107px] h-[24px] shrink-0 rounded-[3px] bg-gradient-to-b from-[#f5f3ef] to-[#e1ddd6] border border-[#aaa59b] flex items-center justify-between pl-[6px] pr-[5px] font-bold text-[11.4px]">•Camada 1<span className="flex flex-col gap-[3px]"><svg width="7" height="5"><path d="M0 5 L3.5 0 L7 5Z" fill="#555" /></svg><svg width="7" height="5"><path d="M0 0 L3.5 5 L7 0Z" fill="#555" /></svg></span></div>
    <div className="ml-[6px] w-[885px] shrink-0 text-[13px] whitespace-nowrap">Cor: <b>#782121</b>; <b>Clique</b> para definir o preenchimento, <b>Shift+clique</b> para definir o contorno</div>
    <div className="w-px h-[26px] shrink-0 bg-[#bdb8ae]" />
    <div className="w-[62px] shrink-0 pl-[3px] leading-[13px] text-[11px]">
      <div className="flex justify-between"><span>X:</span><span>502,71</span></div>
      <div className="flex justify-between"><span>Y:</span><span>-1687,44</span></div>
    </div>
    <span className="ml-[9px] w-[15px] shrink-0 text-[12px]">Z:</span>
    <div className="flex h-[23px] shrink-0">
      <div className="w-[41px] bg-white border border-[#b0aba1] rounded-[2px] text-center text-[12px] leading-[21px]">91%</div>
      <div className="w-[11px] flex flex-col items-center justify-around py-[2px]"><svg width="7" height="5"><path d="M0 5 L3.5 0 L7 5Z" fill="#555" /></svg><svg width="7" height="5"><path d="M0 0 L3.5 5 L7 0Z" fill="#555" /></svg></div>
    </div>
  </div>
);

const Task = ({ w, active, icon, text }: { w: string; active?: boolean; icon: React.ReactNode; text: string }) => (
  <div className={w + " h-[22px] shrink-0 rounded-[2px] flex items-center pl-[6px] gap-[7px] whitespace-nowrap text-[13px] " + (active ? "bg-[#6e5e55] text-[#f0ece6]" : "bg-[#2c2b28] text-[#d9d5cc]")}>
    <span className="w-[18px] flex justify-center">{icon}</span><span>{text}</span>
  </div>
);

const TaskBar = () => (
  <div className="h-[25px] bg-[#33322e] flex items-center relative">
    <div className="ml-[3px] w-[16px] h-[14px] shrink-0 bg-[#a34ba8] border border-[#dcc0de] flex flex-col"><div className="h-[3px] bg-[#f0d8f0]" /><div className="h-[4px] mt-[2px] ml-[5px] w-[9px] bg-[#d9a8dc]" /></div>
    <div className="ml-[9px] w-[3px] h-[12px] shrink-0 border-l border-r border-[#55534e]" />
    <Task w="w-[197px] ml-[4px]" icon={<Firefox s={18} />} text="[Guinevere: Cromolog..." />
    <Task w="w-[196px] ml-[2px]" icon={<svg width="14" height="18"><path d="M1 1 H9 L13 5 V17 H1Z" fill="#eef2f6" stroke="#9aa4ad" /><path d="M3 8 h8 M3 11 h8 M3 14 h8" stroke="#5c8ab8" /></svg>} text="TESE_Andre Uebe_83...." />
    <Task w="w-[196px] ml-[4px]" active icon={<InkLogo s={18} />} text="/home/andre/Doutorad..." />
    <div className="ml-[592px] flex h-[22px] shrink-0">
      <div className="w-[34px] bg-[#a08a7e] border border-[#26251f] flex items-center justify-center"><InkLogo s={18} /></div>
      <div className="w-[36px] border-r border-[#26251f]" />
      <div className="w-[36px] border-r border-[#26251f]" />
    </div>
  </div>
);

export default function App() {
  return (
    <div className="relative w-[1366px] h-[768px] overflow-hidden bg-[#d8d4cc] [font-family:'DejaVu_Sans',sans-serif]">
      <Defs />
      <TopBar />
      <TitleBar />
      <MenuBar />
      <ToolBar />
      <div className="h-[569px] flex">
        <LeftTools />
        <div className="w-[1226px] flex flex-col bg-[#d8d4cc]">
          <HRuler />
          <div className="flex h-[533px]">
            <VRuler />
            <Canvas />
            <VScroll />
            <div className="flex-1 flex flex-col items-center justify-center gap-[2px]"><div className="w-[5px] h-px bg-[#8f8a80]" /><div className="w-[5px] h-px bg-[#8f8a80]" /><div className="w-[5px] h-px bg-[#8f8a80]" /></div>
          </div>
          <HScroll />
        </div>
        <Dock />
        <div className="flex-1 flex bg-[#b1aca2]">
          <CommandCol />
          <SnapCol />
        </div>
      </div>
      <Palette />
      <StatusBar />
      <TaskBar />
      <svg width="16" height="24" viewBox="0 0 16 24" className="absolute left-[645px] top-[708px]"><path d="M1 1 V17 L5 13 L8 20 L11 19 L8 12 L13 12 Z" fill="#fff" stroke="#000" /></svg>
    </div>
  );
}
